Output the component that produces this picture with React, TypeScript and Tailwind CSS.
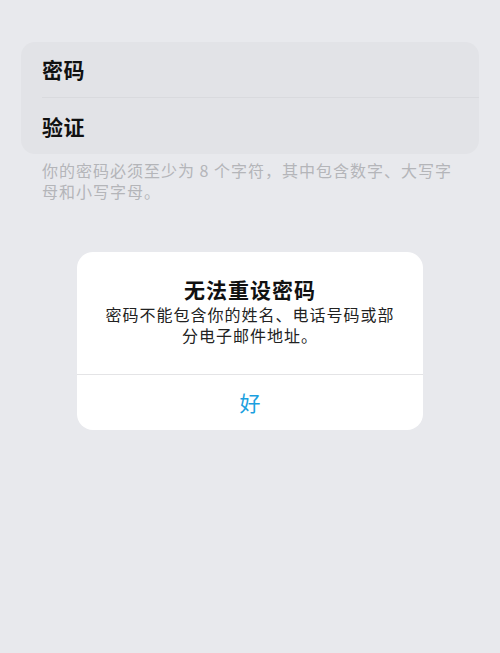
const font = "font-['Noto_Sans_CJK_SC','Noto_Sans',sans-serif]"

const rows = ['密码', '验证']

const App = () => {
  return (
    <div className={`min-h-[653px] w-[500px] bg-[#e8e9ed] ${font}`}>
      <div className="px-[21px] pt-[42px]">
        <div className="overflow-hidden rounded-[14px] bg-[#e2e3e7]">
          {rows.map((label, i) => (
            <div key={label} className="pl-[21px]">
              <div
                className={`flex h-[56px] items-center text-[21px] font-bold leading-none tracking-[0.5px] text-[#111] ${i === 0 ? 'border-b border-[#d9dade]' : ''}`}
              >
                {label}
              </div>
            </div>
          ))}
        </div>
        <p className="mt-[6px] px-[21px] text-[16px] leading-[21px] tracking-[1px] text-[#b4b5b9]">
          你的密码必须至少为 8 个字符，其中包含数字、大写字母和小写字母。
        </p>
      </div>

      {/* 알림 */}
      <div className="mx-auto mt-[50px] w-[346px] overflow-hidden rounded-[16px] bg-white">
        <div className="flex flex-col items-center px-[26px] pb-[28px] pt-[23px] text-center">
          <p className="text-[21px] font-bold leading-[28px] tracking-[1px] text-[#111]">
            无法重设密码
          </p>
          <p className="mt-[1px] text-[16px] leading-[21px] tracking-[1px] text-[#222]">
            密码不能包含你的姓名、电话号码或部分电子邮件地址。
          </p>
        </div>
        <button className="flex h-[56px] w-full items-center justify-center border-t border-[#e4e4e6] text-[21px] text-[#1b9fe0]">
          好
        </button>
      </div>
    </div>
  )
}

export default App
